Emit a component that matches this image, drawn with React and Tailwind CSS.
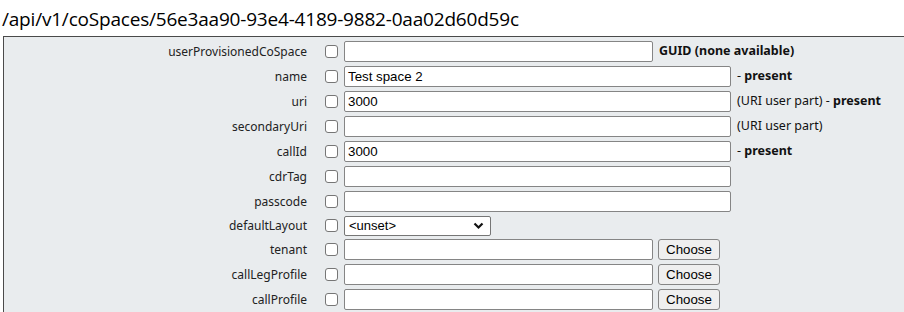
import React from "react";

const ROWS = [
  { label: "userProvisionedCoSpace", value: "", width: "w-[309px]", note: <b>GUID (none available)</b> },
  { label: "name", value: "Test space 2", note: <><span>- </span><b>present</b></> },
  { label: "uri", value: "3000", note: <><span>(URI user part) - </span><b>present</b></> },
  { label: "secondaryUri", value: "", note: <span>(URI user part)</span> },
  { label: "callId", value: "3000", note: <><span>- </span><b>present</b></> },
  { label: "cdrTag", value: "" },
  { label: "passcode", value: "" },
  { label: "defaultLayout", select: true },
  { label: "tenant", width: "w-[309px]", choose: true },
  { label: "callLegProfile", width: "w-[309px]", choose: true },
  { label: "callProfile", width: "w-[309px]", choose: true },
];

const Checkbox = () => (
  <span className="block w-[13px] h-[13px] shrink-0 rounded-[3px] border border-[#767676] bg-white" />
);

const Row = ({ row }) => (
  <div className={`flex items-center ${row.select ? "h-[23px]" : "h-[25px]"}`}>
    <div className="w-[303px] shrink-0 text-right text-[12px] text-[#222]">{row.label}</div>
    <div className="w-[18px] shrink-0" />
    <Checkbox />
    <div className="w-[6px] shrink-0" />
    {row.select ? (
      <div className="flex items-center justify-between w-[147px] h-[20px] px-[4px] border border-[#767676] rounded-[2px] bg-white font-['Liberation_Sans',sans-serif] text-[13px] text-black">
        <span>&lt;unset&gt;</span>
        <svg width="11" height="8" viewBox="0 0 11 8" className="mr-[2px]">
          <path d="M1.5 1.5 L5.5 5.5 L9.5 1.5" fill="none" stroke="#111" strokeWidth="2.2" />
        </svg>
      </div>
    ) : (
      <div className={`${row.width || "w-[387px]"} h-[21px] shrink-0 flex items-center px-[3px] border border-[#858585] rounded-[2px] bg-white font-['Liberation_Sans',sans-serif] text-[13.3px] text-black`}>
        {row.value}
      </div>
    )}
    {row.choose && (
      <div className="ml-[5px] w-[62px] h-[21px] flex items-center justify-center border border-[#858585] rounded-[3px] bg-[#efefef] font-['Liberation_Sans',sans-serif] text-[13.3px] text-black">
        Choose
      </div>
    )}
    {row.note && <div className="ml-[6px] text-[12.5px] text-[#111] whitespace-nowrap">{row.note}</div>}
  </div>
);

export default function App() {
  return (
    <div className="w-[904px] h-[312px] overflow-hidden bg-white font-['Noto_Sans',sans-serif]">
      <div className="h-[36px] pl-[2px] pt-[7px] text-[19px] leading-[24px] text-black font-['Open_Sans',sans-serif] tracking-[-0.2px]">
        /api/v1/coSpaces/56e3aa90-93e4-4189-9882-0aa02d60d59c
      </div>
      <div className="ml-[3px] border border-r-0 border-[#4a4a4a] bg-[#e9ecee] pt-[2px] pb-[4px]">
        {ROWS.map((r) => (
          <Row key={r.label} row={r} />
        ))}
      </div>
    </div>
  );
}
